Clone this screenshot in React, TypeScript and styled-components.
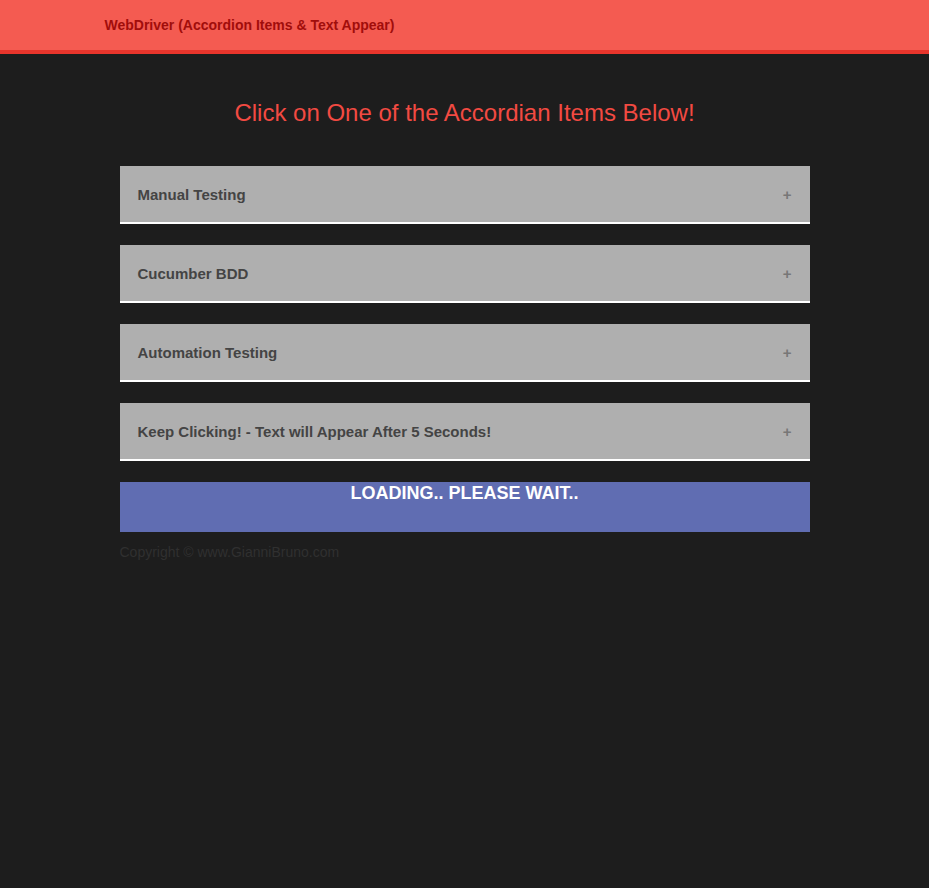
import React from "react";
import styled, { createGlobalStyle } from "styled-components";

const Global = createGlobalStyle`
  html, body { margin: 0; padding: 0; background: #1d1d1d; }
  body { font-family: "Liberation Sans", Arial, sans-serif; }
`;

const Header = styled.header`
  background: #f45b51;
  border-bottom: 4px solid #e8352c;
  height: 50px;
  display: flex;
  justify-content: center;
`;

const HeaderInner = styled.div`
  width: 750px;
  padding: 0 15px;
  box-sizing: border-box;
  display: flex;
  align-items: center;
`;

const Brand = styled.span`
  color: #a10d0b;
  font-size: 14px;
  font-weight: bold;
`;

const Main = styled.main`
  width: 690px;
  margin: 0 auto;
  display: flex;
  flex-direction: column;
`;

const Title = styled.h1`
  margin: 46px 0 40px;
  text-align: center;
  color: #f24a42;
  font-size: 24px;
  font-weight: normal;
  line-height: 26px;
`;

const List = styled.div`
  display: flex;
  flex-direction: column;
  gap: 21px;
`;

const Item = styled.button`
  all: unset;
  box-sizing: border-box;
  height: 58px;
  background: #afafaf;
  border-bottom: 2px solid #ffffff;
  display: flex;
  align-items: center;
  justify-content: space-between;
  padding: 0 18px;
  cursor: pointer;
`;

const ItemLabel = styled.span`
  color: #444444;
  font-size: 15px;
  font-weight: bold;
`;

const Plus = styled.span`
  color: #777777;
  font-size: 15px;
  font-weight: bold;
`;

const Loading = styled.div`
  margin-top: 21px;
  height: 50px;
  background: #606db2;
  color: #ffffff;
  font-size: 18px;
  font-weight: bold;
  text-align: center;
  line-height: 22px;
`;

const Copyright = styled.p`
  margin: 12px 0 0;
  color: #303030;
  font-size: 14px;
  line-height: 16px;
`;

const items = [
  "Manual Testing",
  "Cucumber BDD",
  "Automation Testing",
  "Keep Clicking! - Text will Appear After 5 Seconds!",
];

export default function App() {
  return (
    <>
      <Global />
      <Header>
        <HeaderInner>
          <Brand>WebDriver (Accordion Items &amp; Text Appear)</Brand>
        </HeaderInner>
      </Header>
      <Main>
        <Title>Click on One of the Accordian Items Below!</Title>
        <List>
          {items.map((t) => (
            <Item key={t}>
              <ItemLabel>{t}</ItemLabel>
              <Plus>+</Plus>
            </Item>
          ))}
        </List>
        <Loading>LOADING.. PLEASE WAIT..</Loading>
        <Copyright>Copyright © www.GianniBruno.com</Copyright>
      </Main>
    </>
  );
}
